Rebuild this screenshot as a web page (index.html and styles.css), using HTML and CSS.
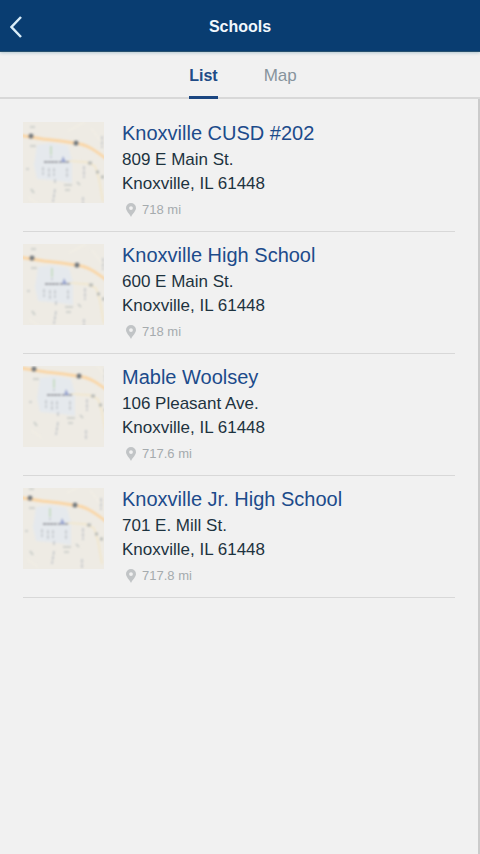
FILE: index.html
```html
<!DOCTYPE html>
<html lang="en">
<head>
<meta charset="utf-8">
<meta name="viewport" content="width=device-width, initial-scale=1">
<title>Schools</title>
<link rel="stylesheet" href="styles.css">
</head>
<body>
<svg class="defs" aria-hidden="true">
  <defs>
    <symbol id="pin" viewBox="0 0 10 14">
      <path fill-rule="evenodd" d="M5 0a5 5 0 0 0-5 5c0 3 3 5 5 9 2-4 5-6 5-9a5 5 0 0 0-5-5zm0 3.200a1.900 1.900 0 1 1 0 3.800 1.900 1.900 0 0 1 0-3.800z"/>
    </symbol>
    <filter id="soft" x="-5%" y="-5%" width="110%" height="110%"><feGaussianBlur stdDeviation="0.8"/></filter>
    <g id="town">
      <path d="M14 23L28 21 45 24 49 38V61L36 59 14 57 11 43z" fill="#e5e9ed"/>
      <path d="M-5 13L1 14 20 17 38 19 51 21C64 22 72 28 90 42" fill="none" stroke="#fad6a6" stroke-width="2.800"/>
      <path d="M45 39L63 40 72 44 76 57 80 80" fill="none" stroke="#f2e6c9" stroke-width="1.500"/>
      <path d="M62 0L45 9M5 75L16 83M68 6L80 22" fill="none" stroke="#f5f1e6"/>
      <path d="M21 40H35M36 40H46" stroke="#96979e" stroke-width="2" stroke-dasharray="3 .6"/>
      <path d="M28 24V36M20 45V53M26 46V56M31 46V54M44 46V56M61 44V56M32 67L30 80M32 57V62M60 75V85M79 14V26" stroke="#bcc0c6" stroke-width="1.300" stroke-dasharray="4 1"/>
      <path d="M41 63H49M42 68H47M54 60L57 63M7 24H13M8 67L11 71M3 47H6M7 5H12" stroke="#c6cac7" stroke-width="1.700"/>
      <path d="M28 24V33" stroke="#c9dcc5" stroke-width="2"/>
      <path d="M40 34L43 40H38z" fill="#98a5d2"/>
      <circle cx="8" cy="14" r="2.600" fill="#787d80"/>
      <circle cx="53" cy="21" r="2.600" fill="#757b80"/>
      <path d="M65 41H69M73 50H76M78 55H81" stroke="#b9bcb8" stroke-width="3"/>
    </g>
  </defs>
</svg>

<header class="topbar">
  <button class="back" type="button" aria-label="Back">
    <svg viewBox="0 0 12 22" aria-hidden="true"><path d="M11 1L1.500 11 11 21"/></svg>
  </button>
  <h1>Schools</h1>
</header>

<nav class="tabs" aria-label="View">
  <a class="tab active" href="#list" aria-current="page">List</a>
  <a class="tab" href="#map">Map</a>
</nav>

<main id="list">
  <ul class="schools">
    <li class="school">
      <svg class="thumb" viewBox="0 0 81 81" aria-hidden="true"><g filter="url(#soft)"><use href="#town"/></g></svg>
      <div class="info">
        <h2><a href="#cusd">Knoxville CUSD #202</a></h2>
        <address>809 E Main St.<br>Knoxville, IL 61448</address>
        <p class="distance"><svg aria-hidden="true"><use href="#pin"/></svg>718 mi</p>
      </div>
    </li>
    <li class="school">
      <svg class="thumb" viewBox="0 0 81 81" aria-hidden="true"><g filter="url(#soft)"><use href="#town" x="1"/></g></svg>
      <div class="info">
        <h2><a href="#high">Knoxville High School</a></h2>
        <address>600 E Main St.<br>Knoxville, IL 61448</address>
        <p class="distance"><svg aria-hidden="true"><use href="#pin"/></svg>718 mi</p>
      </div>
    </li>
    <li class="school">
      <svg class="thumb" viewBox="0 0 81 81" aria-hidden="true"><g filter="url(#soft)"><use href="#town" x="3" y="-11"/></g></svg>
      <div class="info">
        <h2><a href="#woolsey">Mable Woolsey</a></h2>
        <address>106 Pleasant Ave.<br>Knoxville, IL 61448</address>
        <p class="distance"><svg aria-hidden="true"><use href="#pin"/></svg>717.6 mi</p>
      </div>
    </li>
    <li class="school">
      <svg class="thumb" viewBox="0 0 81 81" aria-hidden="true"><g filter="url(#soft)"><use href="#town" x="-1" y="-4"/></g></svg>
      <div class="info">
        <h2><a href="#junior">Knoxville Jr. High School</a></h2>
        <address>701 E. Mill St.<br>Knoxville, IL 61448</address>
        <p class="distance"><svg aria-hidden="true"><use href="#pin"/></svg>717.8 mi</p>
      </div>
    </li>
  </ul>
</main>
</body>
</html>
```
FILE: styles.css
```css
* {
  box-sizing: border-box;
}

body {
  display: flex;
  flex-direction: column;
  min-height: 100vh;
  margin: 0;
  background: #f1f1f1;
  color: #1d333f;
  font-family: "Liberation Sans", Arial, sans-serif;
}

h1,
h2,
p,
ul {
  margin: 0;
  padding: 0;
}

a {
  color: inherit;
  text-decoration: none;
}

.defs {
  position: absolute;
  width: 0;
  height: 0;
}

.topbar {
  display: grid;
  grid-template-columns: 40px 1fr 40px;
  align-items: center;
  height: 52px;
  background: #093d71;
  border-bottom: 1px solid #28516f;
  box-shadow: 0 1px 3px #b4c9d2;
  color: #f2f8fd;
}

.topbar h1 {
  padding-top: 2px;
  font-size: 16px;
  line-height: 20px;
  text-align: center;
}

.back {
  height: 51px;
  padding: 2px 0 0 10px;
  border: 0;
  background: none;
  text-align: left;
}

.back svg {
  display: block;
  width: 12px;
  height: 22px;
  fill: none;
  stroke: #d9edf8;
  stroke-width: 2.5;
}

.tabs {
  display: flex;
  justify-content: center;
  gap: 46px;
  height: 47px;
  padding-left: 6px;
  border-bottom: 2px solid #d8d8d8;
}

.tab {
  height: 47px;
  padding-top: 14px;
  border-bottom: 3px solid transparent;
  color: #87949d;
  font-size: 17px;
  line-height: 20px;
}

.tab.active {
  border-color: #1b4681;
  color: #204b86;
  font-size: 16px;
  font-weight: bold;
}

main {
  flex: 1;
  padding: 11px 23px 0;
  border-right: 2px solid #cbcbcb;
}

.schools {
  list-style: none;
}

.school {
  display: flex;
  gap: 18px;
  height: 122px;
  padding-top: 12px;
  border-bottom: 1px solid #d8d8d8;
}

.thumb {
  flex: none;
  width: 81px;
  height: 81px;
  background: #eeebe4;
}

.school h2 {
  color: #1c4b8b;
  font-size: 20px;
  font-weight: normal;
  line-height: 22px;
}

.school address {
  padding-top: 4px;
  font-size: 17px;
  font-style: normal;
  line-height: 24px;
}

.distance {
  display: flex;
  align-items: center;
  gap: 6px;
  padding: 4px 0 0 4px;
  color: #a5abae;
  font-size: 13px;
  line-height: 20px;
}

.distance svg {
  width: 10px;
  height: 14px;
  fill: #c1c4c6;
}
```
